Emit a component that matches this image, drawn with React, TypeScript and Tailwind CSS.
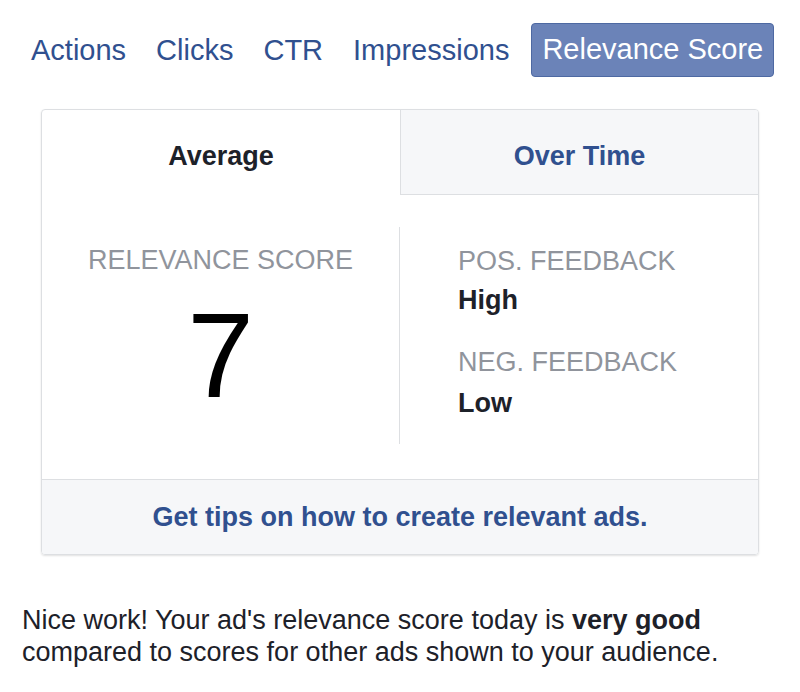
import React from "react";

const tabs = ["Actions", "Clicks", "CTR", "Impressions"];

export default function App() {
  return (
    <div className="h-[692px] w-[800px] bg-white font-['Liberation_Sans',Arial,sans-serif] text-[#1d2129]">
      {/* metric tabs */}
      <div className="flex items-center pl-[31px] pt-[23px]">
        <nav className="flex gap-[30px] text-[29px] leading-[54px] text-[#30508f]">
          {tabs.map((t) => (
            <span key={t}>{t}</span>
          ))}
        </nav>
        <button className="ml-[22px] h-[54px] rounded-[4px] border border-[#4e69a2] bg-[#6b83b8] px-[10px] text-[29px] text-white">
          Relevance Score
        </button>
      </div>

      {/* score card */}
      <div className="ml-[41px] mt-[32px] w-[718px] overflow-hidden rounded-[4px] border border-[#dddfe2] shadow-[0_1px_2px_rgba(0,0,0,0.12)]">
        <div className="grid h-[85px] grid-cols-2 text-[27px] font-bold">
          <div className="flex items-center justify-center pt-[8px]">Average</div>
          <div className="flex items-center justify-center border-b border-l border-[#dddfe2] bg-[#f6f7f9] pt-[8px] text-[#30508f]">
            Over Time
          </div>
        </div>

        <div className="flex h-[284px] pt-[32px]">
          <div className="flex h-[217px] w-[358px] flex-col items-center border-r border-[#dddfe2] pt-[18px]">
            <div className="text-[27px] leading-[30px] text-[#90949c]">RELEVANCE SCORE</div>
            <div className="mt-[20px] text-[120px] leading-none text-black">7</div>
          </div>
          <div className="flex flex-col pl-[58px] pt-[19px] text-[27px] leading-[30px]">
            <div className="text-[#90949c]">POS. FEEDBACK</div>
            <div className="mt-[9px] font-bold">High</div>
            <div className="mt-[32px] text-[#90949c]">NEG. FEEDBACK</div>
            <div className="mt-[11px] font-bold">Low</div>
          </div>
        </div>

        <div className="flex h-[75px] items-center justify-center border-t border-[#dddfe2] bg-[#f6f7f9] text-[27px] font-bold text-[#30508f]">
          Get tips on how to create relevant ads.
        </div>
      </div>

      <p className="ml-[22px] mt-[49px] text-[27px] leading-[32px]">
        Nice work! Your ad's relevance score today is <b>very good</b>
        <br />
        compared to scores for other ads shown to your audience.
      </p>
    </div>
  );
}
